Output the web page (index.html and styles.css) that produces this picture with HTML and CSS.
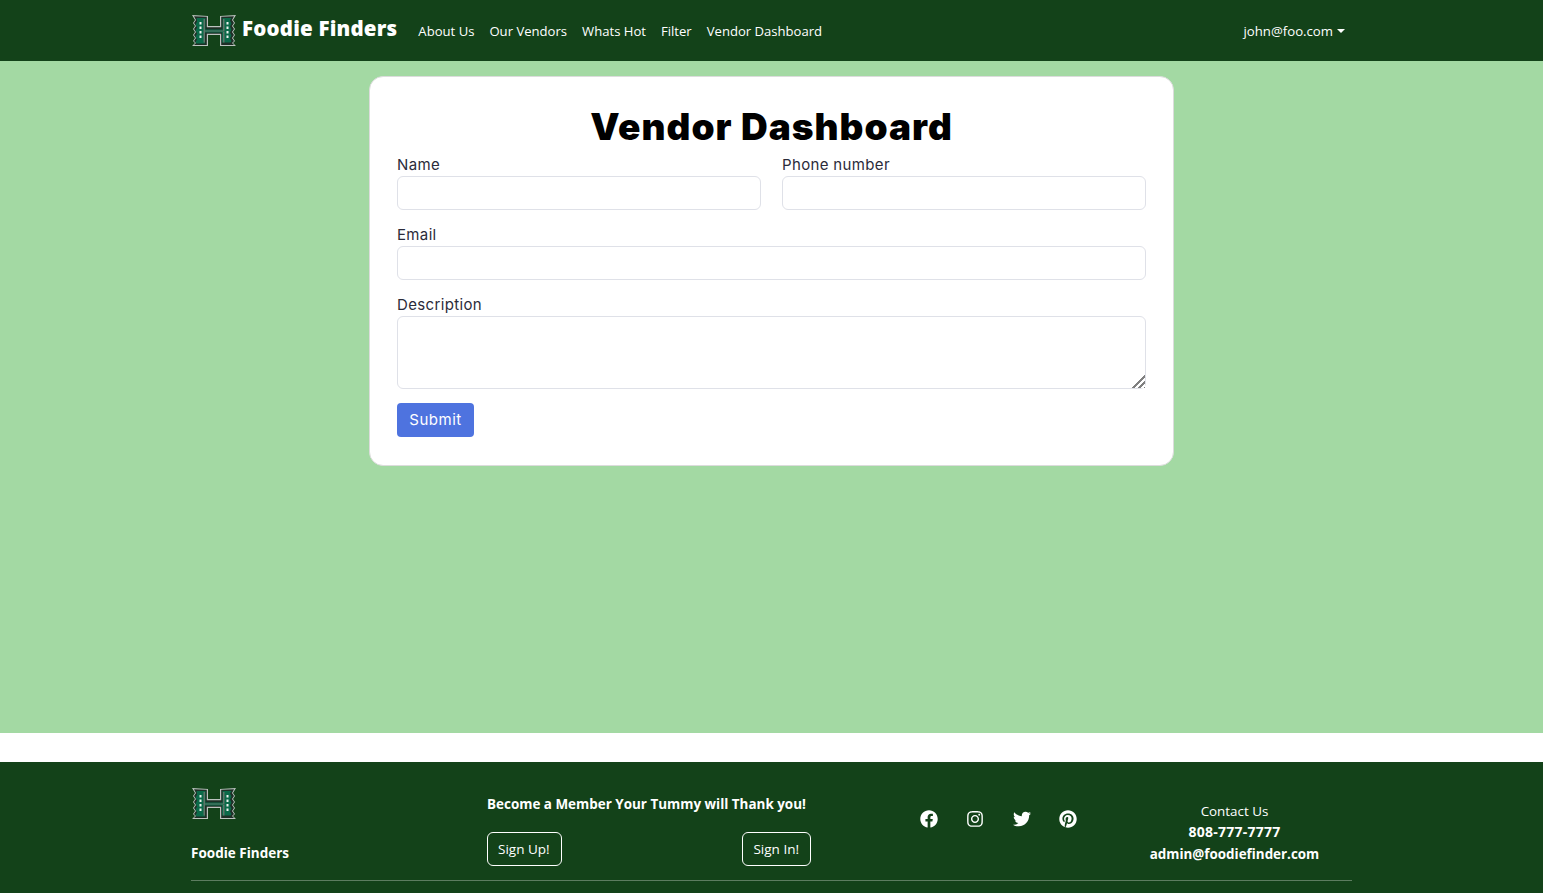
FILE: index.html
```html
<!DOCTYPE html>
<html lang="en">
<head>
  <meta charset="UTF-8">
  <meta name="viewport" content="width=device-width, initial-scale=1.0">
  <title>Foodie Finders</title>
  <link rel="stylesheet" href="styles.css">
</head>
<body>
  <svg class="sprite" width="0" height="0">
    <symbol id="logo-h" viewBox="0 0 44 34">
      <path fill="#bcc3bf" d="M0 1l16 1v10h12V2l16-1-3 5 2 3-2 3 2 3-2 3 2 3-2 3 2 3-2 2 3 3-16 0V21H16v11H0l3-3-2-2 2-3-2-3 2-3-2-3 2-3-2-3 2-3z"/>
      <path fill="#1f2f26" d="M2 2.200l12.800 .6v10.400h14.400V2.800L42 2.200l-2 3.800 2 3-2 3 2 3-2 3 2 3-2 3 2 3-2 2 2 2-12.800 0V19.800H14.800v11.200H2l2-2-2-2 2-3-2-3 2-3-2-3 2-3-2-3 2-3z"/>
      <path fill="#0b6a49" d="M4.500 4h9v11.500h17V4h9l-1.500 2.500 1.500 3-1.500 3 1.500 3-1.500 3 1.500 3-1.500 3 1.500 2.500-1 1.500h-8.500V18.500h-17v11h-8.500l-1-1.500 1.500-2.500-1.500-3 1.500-3-1.500-3 1.500-3-1.500-3 1.500-3z"/>
      <path fill="#5f7469" d="M11.500 5h1.500v11.500h18V5h1.500v12.500H13v11h-1.500zM31 18h1.500v10.500H31z"/>
      <path fill="#eef2ef" d="M7.500 8h2v2.500h-2zM7.500 12.500h2V15h-2zM7.500 17h2v2.500h-2zM7.500 21.500h2V24h-2zM34.500 8h2v2.500h-2zM34.500 12.500h2V15h-2zM34.500 17h2v2.500h-2zM34.500 21.500h2V24h-2z"/>
    </symbol>
  </svg>

  <header class="navbar">
    <div class="navbar-inner">
      <a class="brand" href="#">
        <svg class="logo"><use href="#logo-h"/></svg>
        <span class="brand-name">Foodie Finders</span>
      </a>
      <nav class="nav-links">
        <a href="#">About Us</a>
        <a href="#">Our Vendors</a>
        <a href="#">Whats Hot</a>
        <a href="#">Filter</a>
        <a href="#">Vendor Dashboard</a>
      </nav>
      <a class="user-menu" href="#">john@foo.com<span class="caret"></span></a>
    </div>
  </header>

  <main class="content">
    <section class="card">
      <h1>Vendor Dashboard</h1>
      <form class="vendor-form">
        <div class="field-row">
          <div class="field">
            <label for="name">Name</label>
            <input type="text" id="name">
          </div>
          <div class="field">
            <label for="phone">Phone number</label>
            <input type="text" id="phone">
          </div>
        </div>
        <div class="field">
          <label for="email">Email</label>
          <input type="text" id="email">
        </div>
        <div class="field">
          <label for="description">Description</label>
          <textarea id="description"></textarea>
        </div>
        <button type="submit" class="submit">Submit</button>
      </form>
    </section>
  </main>

  <footer class="footer">
    <div class="footer-inner">
      <div class="footer-row">
        <div class="footer-brand">
          <svg class="logo"><use href="#logo-h"/></svg>
          <strong>Foodie Finders</strong>
        </div>
        <div class="footer-join">
          <strong class="join-title">Become a Member Your Tummy will Thank you!</strong>
          <div class="join-buttons">
            <a class="outline-btn" href="#">Sign Up!</a>
            <a class="outline-btn" href="#">Sign In!</a>
          </div>
        </div>
        <div class="socials">
          <svg viewBox="0 0 512 512"><path d="M504 256C504 119 393 8 256 8S8 119 8 256c0 123.78 90.69 226.38 209.25 245V327.69h-63V256h63v-54.64c0-62.15 37-96.48 93.67-96.48 27.14 0 55.52 4.84 55.52 4.84v61h-31.28c-30.8 0-40.41 19.12-40.41 38.73V256h68.78l-11 71.69h-57.78V501C413.31 482.38 504 379.78 504 256z"/></svg>
          <svg viewBox="0 0 448 512"><path d="M224.1 141c-63.6 0-114.9 51.3-114.9 114.9s51.3 114.9 114.9 114.9S339 319.5 339 255.9 287.7 141 224.1 141zm0 189.6c-41.1 0-74.7-33.5-74.7-74.7s33.5-74.7 74.7-74.7 74.7 33.5 74.7 74.7-33.6 74.7-74.7 74.7zm146.4-194.3c0 14.9-12 26.8-26.8 26.8-14.9 0-26.8-12-26.8-26.8s12-26.8 26.8-26.8 26.8 12 26.8 26.8zm76.1 27.2c-1.7-35.9-9.9-67.7-36.2-93.9-26.2-26.2-58-34.4-93.9-36.2-37-2.1-147.9-2.1-184.9 0-35.8 1.7-67.6 9.9-93.9 36.1s-34.4 58-36.2 93.9c-2.1 37-2.1 147.9 0 184.9 1.7 35.9 9.9 67.7 36.2 93.9s58 34.4 93.9 36.2c37 2.1 147.9 2.1 184.9 0 35.9-1.7 67.7-9.9 93.9-36.2 26.2-26.2 34.4-58 36.2-93.9 2.1-37 2.1-147.8 0-184.8zM398.8 388c-7.8 19.6-22.9 34.7-42.6 42.6-29.5 11.7-99.5 9-132.1 9s-102.7 2.6-132.1-9c-19.6-7.8-34.7-22.9-42.6-42.6-11.7-29.5-9-99.5-9-132.1s-2.6-102.7 9-132.1c7.8-19.6 22.9-34.7 42.6-42.6 29.5-11.7 99.5-9 132.1-9s102.7-2.6 132.1 9c19.6 7.8 34.7 22.9 42.6 42.6 11.7 29.5 9 99.5 9 132.1s2.7 102.7-9 132.1z"/></svg>
          <svg viewBox="0 0 512 512"><path d="M459.37 151.716c.325 4.548.325 9.097.325 13.645 0 138.72-105.583 298.558-298.558 298.558-59.452 0-114.68-17.219-161.137-47.106 8.447.974 16.568 1.299 25.34 1.299 49.055 0 94.213-16.568 130.274-44.832-46.132-.975-84.792-31.188-98.112-72.772 6.498.974 12.995 1.624 19.818 1.624 9.421 0 18.843-1.3 27.614-3.573-48.081-9.747-84.143-51.98-84.143-102.985v-1.299c13.969 7.797 30.214 12.67 47.431 13.319-28.264-18.843-46.781-51.005-46.781-87.391 0-19.492 5.197-37.36 14.294-52.954 51.655 63.675 129.3 105.258 216.365 109.807-1.624-7.797-2.599-15.918-2.599-24.04 0-57.828 46.782-104.934 104.934-104.934 30.213 0 57.502 12.67 76.67 33.137 23.715-4.548 46.456-13.32 66.599-25.34-7.798 24.366-24.366 44.833-46.132 57.827 21.117-2.273 41.584-8.122 60.426-16.243-14.292 20.791-32.161 39.308-52.628 54.253z"/></svg>
          <svg viewBox="0 0 496 512"><path d="M496 256c0 137-111 248-248 248-25.6 0-50.2-3.9-73.4-11.1 10.1-16.5 25.2-43.5 30.8-65 3-11.6 15.4-59 15.4-59 8.1 15.4 31.7 28.5 56.8 28.5 74.8 0 128.7-68.8 128.7-154.3 0-81.9-66.9-143.2-152.9-143.2-107 0-163.9 71.8-163.9 150.1 0 36.4 19.4 81.7 50.3 96.1 4.7 2.2 7.2 1.2 8.3-3.3.8-3.4 5-20.3 6.9-28.1.6-2.5.3-4.7-1.7-7.1-10.1-12.5-18.3-35.3-18.3-56.6 0-54.7 41.4-107.6 112-107.6 60.9 0 103.6 41.5 103.6 100.9 0 67.1-33.9 113.6-78 113.6-24.3 0-42.6-20.1-36.7-44.8 7-29.5 20.5-61.3 20.5-82.6 0-19-10.2-34.9-31.4-34.9-24.9 0-44.9 25.7-44.9 60.2 0 22 7.4 36.8 7.4 36.8s-24.5 103.8-29 123.2c-5 21.4-3 51.6-.9 71.2C65.4 450.9 0 361.1 0 256 0 119 111 8 248 8s248 111 248 248z"/></svg>
        </div>
        <div class="contact">
          <span>Contact Us</span>
          <strong class="phone">808-777-7777</strong>
          <strong>admin@foodiefinder.com</strong>
        </div>
      </div>
      <hr class="footer-rule">
    </div>
  </footer>
</body>
</html>
```

FILE: styles.css
```css
html, body { height: 893px; overflow: hidden; }
body { margin: 0; font-family: "Open Sans", "Noto Sans", sans-serif; font-size: 14px; color: #212529; background: #fff; }
a { color: inherit; text-decoration: none; }
.sprite { display: block; height: 0; }

.navbar { height: 61px; background: #134219; color: #fff; }
.navbar-inner { display: flex; align-items: center; height: 100%; box-sizing: border-box; padding: 0 198px 0 192px; }
.logo { width: 44px; height: 34px; display: block; }
.brand { display: flex; align-items: center; gap: 6px; margin-right: 21px; }
.brand-name { font-size: 20.500px; font-weight: 800; margin-top: -6px; letter-spacing: .2px; }
.nav-links { display: flex; gap: 15px; font-size: 13.100px; }
.user-menu { margin-left: auto; font-size: 13.200px; }
.caret { display: inline-block; margin-left: 4px; vertical-align: 3px; border-top: 4px solid #fff; border-left: 4px solid transparent; border-right: 4px solid transparent; }

.content { height: 672px; background: #a3d9a3; padding-top: 15px; box-sizing: border-box; }
.card { width: 805px; height: 390px; margin: 0 auto; box-sizing: border-box; padding: 29px 27px 28px; background: #fff; border: 1px solid #dcdcdc; border-radius: 14px; font-family: Inter, sans-serif; }
.card h1 { margin: 0 0 8px; text-align: center; font-size: 37px; line-height: 42px; font-weight: 900; letter-spacing: 1px; color: #000; }
.vendor-form { display: flex; flex-direction: column; gap: 16px; }
.field-row { display: flex; gap: 21px; }
.field { display: flex; flex: 1; flex-direction: column; }
.field label { font-size: 15px; line-height: 20px; margin-top: -1px; margin-bottom: 1px; letter-spacing: .35px; color: #2b2b3a; }
.field input, .field textarea { box-sizing: border-box; width: 100%; height: 34px; border: 1px solid #dfe1e8; border-radius: 6px; background: #fff; display: block; }
.field textarea { height: 73px; }
.field textarea::-webkit-resizer { background: linear-gradient(135deg, #fff 50%, transparent 50%), repeating-linear-gradient(135deg, #808080 0 2px, #fff 2px 4px); }
.submit { align-self: flex-start; width: 77px; height: 34px; margin-top: -2px; padding-bottom: 3px; border: 0; border-radius: 4px; background: #4e73df; color: #fff; font-family: Inter, sans-serif; font-size: 15px; letter-spacing: .5px; }

.footer { margin-top: 29px; height: 131px; background: #134219; color: #fff; }
.footer-inner { padding: 0 191px; }
.footer-row { display: flex; height: 118px; }
.footer-brand { width: 296px; display: flex; flex-direction: column; padding-top: 25px; box-sizing: border-box; font-size: 13.500px; }
.footer-brand .logo { margin-left: 1px; margin-bottom: 23px; }
.footer-join { width: 324px; padding-top: 33px; box-sizing: border-box; }
.join-title { display: block; font-size: 13.450px; line-height: 19px; white-space: nowrap; }
.join-buttons { display: flex; justify-content: space-between; margin-top: 18px; font-size: 13.500px; }
.outline-btn { border: 1px solid #fff; border-radius: 6px; padding: 0 11px 0 10px; line-height: 32px; }
.socials { display: flex; align-items: flex-start; gap: 28.300px; width: 282px; box-sizing: border-box; padding: 48px 0 0 109px; }
.socials svg { width: 18px; height: 18px; fill: #fff; }
.contact { flex: 1; display: flex; flex-direction: column; align-items: center; padding: 39px 0 0 24px; line-height: 21.500px; font-size: 13.400px; }
.contact .phone { font-size: 14px; letter-spacing: .25px; margin-top: -2px; margin-bottom: 2px; }
.footer-rule { margin: 0; border: 0; border-top: 1px solid #5d7d60; }
```
